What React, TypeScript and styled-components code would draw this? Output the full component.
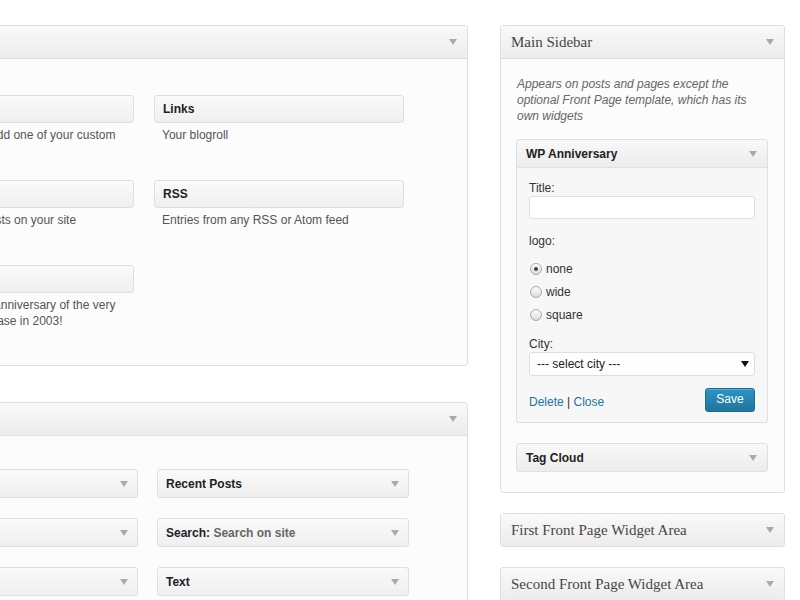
import React from "react";
import styled, { createGlobalStyle } from "styled-components";

const GlobalStyle = createGlobalStyle`
  html, body {
    margin: 0;
    padding: 0;
    overflow: hidden;
    background: #ffffff;
  }
  body {
    font-family: "Liberation Sans", Arial, sans-serif;
    font-size: 12px;
    color: #333;
  }
`;

const Page = styled.div`
  display: flex;
  align-items: flex-start;
  gap: 32px;
  padding-top: 25px;
  margin-left: -140px;
  width: 925px;
`;

const Column = styled.div<{ $width: number; $gap: number }>`
  display: flex;
  flex-direction: column;
  gap: ${(p) => p.$gap}px;
  width: ${(p) => p.$width}px;
  flex-shrink: 0;
`;

const Panel = styled.section`
  border: 1px solid #dfdfdf;
  border-radius: 3px;
  background: #fcfcfc;
  overflow: hidden;
  box-shadow: inset 0 1px 0 #fff;
`;

const PanelHeader = styled.div<{ $open?: boolean }>`
  height: 32px;
  display: flex;
  align-items: center;
  justify-content: space-between;
  padding: 0 10px;
  background: linear-gradient(to bottom, #f9f9f9, #ececec);
  border-bottom: ${(p) => (p.$open ? "1px solid #dfdfdf" : "none")};
  font-family: "Liberation Serif", "Times New Roman", serif;
  font-size: 15px;
  color: #464646;
  white-space: nowrap;
`;

const Arrow = styled.span<{ $color?: string }>`
  display: inline-block;
  width: 0;
  height: 0;
  border-left: 4px solid transparent;
  border-right: 4px solid transparent;
  border-top: 6px solid ${(p) => p.$color || "#aaa"};
  flex-shrink: 0;
`;

const PanelBody = styled.div<{ $pad: string }>`
  padding: ${(p) => p.$pad};
`;

const WidgetGrid = styled.div<{ $col: number; $gap: number; $row: number }>`
  display: grid;
  grid-template-columns: repeat(2, ${(p) => p.$col}px);
  column-gap: ${(p) => p.$gap}px;
  grid-auto-rows: ${(p) => p.$row}px;
`;

const WidgetItem = styled.div`
  display: flex;
  flex-direction: column;
`;

const WidgetBar = styled.div<{ $h: number }>`
  height: ${(p) => p.$h}px;
  display: flex;
  align-items: center;
  justify-content: space-between;
  padding: 0 9px 0 8px;
  border: 1px solid #dfdfdf;
  border-radius: 3px;
  background: linear-gradient(to bottom, #fafafa, #efefef);
  font-weight: bold;
  font-size: 12px;
  color: #222;
  white-space: nowrap;
`;

const InTitle = styled.span`
  color: #666;
`;

const WidgetDesc = styled.div`
  margin-top: 4px;
  padding: 0 8px;
  line-height: 16px;
  color: #555;
  font-size: 12px;
`;

const SidebarDesc = styled.p`
  margin: 0 0 15px;
  padding-left: 1px;
  font-style: italic;
  line-height: 16px;
  color: #666;
`;

const WidgetStack = styled.div`
  display: flex;
  flex-direction: column;
  gap: 20px;
`;

const Widget = styled.div`
  border: 1px solid #dfdfdf;
  border-radius: 3px;
  background: #f7f7f7;
  overflow: hidden;
`;

const WidgetHead = styled.div<{ $open?: boolean }>`
  height: 27px;
  display: flex;
  align-items: center;
  justify-content: space-between;
  padding: 0 10px 0 9px;
  background: linear-gradient(to bottom, #f9f9f9, #ececec);
  border-bottom: ${(p) => (p.$open ? "1px solid #dfdfdf" : "none")};
  font-weight: bold;
  font-size: 12px;
  color: #222;
`;

const WidgetInside = styled.div`
  padding: 12px 12px 10px 12px;
  display: flex;
  flex-direction: column;
`;

const Label = styled.div<{ $mt?: number }>`
  margin-top: ${(p) => p.$mt || 0}px;
  line-height: 16px;
  color: #333;
`;

const TextInput = styled.input`
  box-sizing: border-box;
  width: 100%;
  height: 23px;
  border: 1px solid #dfdfdf;
  border-radius: 3px;
  background: #fff;
  font: inherit;
  padding: 0 5px;
  outline: none;
`;

const RadioList = styled.div`
  margin-top: 8px;
  display: flex;
  flex-direction: column;
`;

const RadioRow = styled.label`
  height: 23px;
  display: flex;
  align-items: center;
  color: #333;
`;

const RadioDot = styled.span<{ $checked?: boolean }>`
  position: relative;
  box-sizing: border-box;
  width: 12px;
  height: 12px;
  margin: 0 4px 0 1px;
  border: 1px solid #aaa;
  border-radius: 50%;
  background: linear-gradient(to bottom, #fdfdfd, #dcdcdc);
  &::after {
    content: "";
    display: ${(p) => (p.$checked ? "block" : "none")};
    position: absolute;
    left: 3px;
    top: 3px;
    width: 4px;
    height: 4px;
    border-radius: 50%;
    background: #444;
  }
`;

const Select = styled.div`
  box-sizing: border-box;
  height: 24px;
  display: flex;
  align-items: center;
  justify-content: space-between;
  padding: 0 5px 0 7px;
  border: 1px solid #dfdfdf;
  border-radius: 3px;
  background: #fdfdfd;
  color: #222;
`;

const WidgetFooter = styled.div`
  margin-top: 12px;
  display: flex;
  align-items: center;
  justify-content: space-between;
`;

const Links = styled.div`
  color: #333;
  padding-top: 3px;
`;

const Link = styled.a`
  color: #21759b;
  text-decoration: none;
`;

const SaveButton = styled.button`
  box-sizing: border-box;
  width: 50px;
  height: 24px;
  border: 1px solid #1e6a8d;
  border-radius: 3px;
  background: linear-gradient(to bottom, #2a95c5, #21759b);
  color: #fff;
  font-family: "Liberation Sans", Arial, sans-serif;
  font-size: 12px;
  padding: 0 0 2px;
  box-shadow: inset 0 1px 0 rgba(120, 200, 230, 0.5);
`;

type Avail = { title: string; desc?: string };

const available: Avail[] = [
  { title: "Custom Menu", desc: "Use this widget to add one of your custom menus as a widget." },
  { title: "Links", desc: "Your blogroll" },
  { title: "Recent Posts", desc: "The most recent posts on your site" },
  { title: "RSS", desc: "Entries from any RSS or Atom feed" },
  {
    title: "WP Anniversary",
    desc: "Celebrate the 10th anniversary of the very first WordPress release in 2003!",
  },
];

const inactive: { title: string; sub?: string }[] = [
  { title: "Archives" },
  { title: "Recent Posts" },
  { title: "Calendar" },
  { title: "Search:", sub: "Search on site" },
  { title: "Categories" },
  { title: "Text" },
  { title: "Meta" },
  { title: "Pages" },
];

export default function App() {
  return (
    <>
      <GlobalStyle />
      <Page>
        <Column $width={608} $gap={36}>
          <Panel>
            <PanelHeader $open>
              <span>Available Widgets</span>
              <Arrow />
            </PanelHeader>
            <PanelBody $pad="36px 20px 15px 23px">
              <WidgetGrid $col={250} $gap={20} $row={85}>
                {available.map((w) => (
                  <WidgetItem key={w.title}>
                    <WidgetBar $h={26}>{w.title}</WidgetBar>
                    <WidgetDesc>{w.desc}</WidgetDesc>
                  </WidgetItem>
                ))}
              </WidgetGrid>
            </PanelBody>
          </Panel>
          <Panel>
            <PanelHeader $open>
              <span>Inactive Widgets</span>
              <Arrow />
            </PanelHeader>
            <PanelBody $pad="33px 20px 20px 25px">
              <WidgetGrid $col={252} $gap={19} $row={49}>
                {inactive.map((w, i) => (
                  <WidgetItem key={i}>
                    <WidgetBar $h={27}>
                      <span>
                        {w.title}
                        {w.sub && <InTitle> {w.sub}</InTitle>}
                      </span>
                      <Arrow />
                    </WidgetBar>
                  </WidgetItem>
                ))}
              </WidgetGrid>
            </PanelBody>
          </Panel>
        </Column>

        <Column $width={285} $gap={20}>
          <Panel>
            <PanelHeader $open>
              <span>Main Sidebar</span>
              <Arrow />
            </PanelHeader>
            <PanelBody $pad="17px 16px 20px 15px">
              <SidebarDesc>
                Appears on posts and pages except the optional Front Page template, which has its own
                widgets
              </SidebarDesc>
              <WidgetStack>
                <Widget>
                  <WidgetHead $open>
                    <span>WP Anniversary</span>
                    <Arrow />
                  </WidgetHead>
                  <WidgetInside>
                    <Label>Title:</Label>
                    <TextInput type="text" />
                    <Label $mt={14}>logo:</Label>
                    <RadioList>
                      <RadioRow>
                        <RadioDot $checked />
                        none
                      </RadioRow>
                      <RadioRow>
                        <RadioDot />
                        wide
                      </RadioRow>
                      <RadioRow>
                        <RadioDot />
                        square
                      </RadioRow>
                    </RadioList>
                    <Label $mt={10}>City:</Label>
                    <Select>
                      <span>--- select city ---</span>
                      <Arrow $color="#111" />
                    </Select>
                    <WidgetFooter>
                      <Links>
                        <Link href="#">Delete</Link> | <Link href="#">Close</Link>
                      </Links>
                      <SaveButton>Save</SaveButton>
                    </WidgetFooter>
                  </WidgetInside>
                </Widget>
                <Widget>
                  <WidgetHead>
                    <span>Tag Cloud</span>
                    <Arrow />
                  </WidgetHead>
                </Widget>
              </WidgetStack>
            </PanelBody>
          </Panel>
          <Panel>
            <PanelHeader>
              <span>First Front Page Widget Area</span>
              <Arrow />
            </PanelHeader>
          </Panel>
          <Panel>
            <PanelHeader>
              <span>Second Front Page Widget Area</span>
              <Arrow />
            </PanelHeader>
          </Panel>
        </Column>
      </Page>
    </>
  );
}
